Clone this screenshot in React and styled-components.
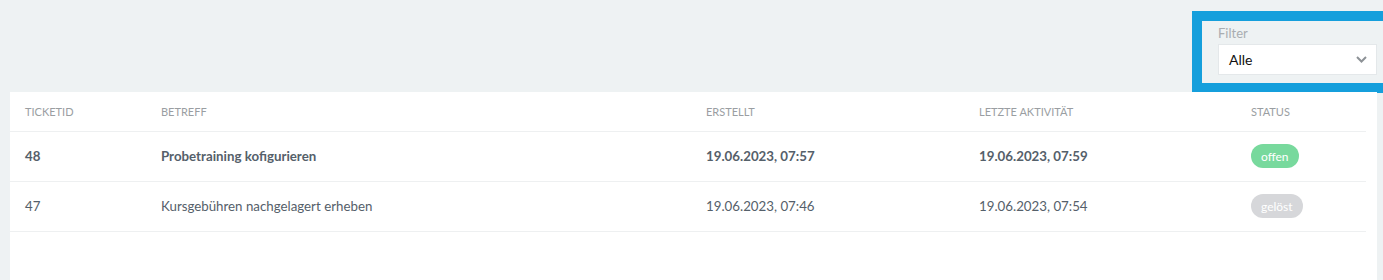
import React from "react";
import styled, { createGlobalStyle } from "styled-components";

const Global = createGlobalStyle`
  html, body { margin: 0; padding: 0; background: #eef2f3; }
  body { font-family: Lato, "Noto Sans", sans-serif; overflow: hidden; }
  * { box-sizing: border-box; }
`;

const Page = styled.div`
  width: 1383px;
  height: 280px;
  background: #eef2f3;
  display: flex;
  flex-direction: column;
  overflow: hidden;
`;

const TopBar = styled.div`
  display: flex;
  justify-content: flex-end;
  padding-top: 11px;
  height: 92px;
`;

const FilterFrame = styled.div`
  width: 201px;
  margin-right: -10px;
  flex-shrink: 0;
  border: 10px solid #159fdc;
  background: #eef2f3;
  padding: 4px 0 7px 16px;
  height: 82px;
  display: flex;
  flex-direction: column;
`;

const FilterInner = styled.div`
  display: flex;
  flex-direction: column;
  width: 159px;
`;

const FilterLabel = styled.label`
  font-size: 13px;
  color: #a9adb1;
  line-height: 16px;
  height: 19px;
`;

const Select = styled.div`
  height: 31px;
  background: #fff;
  border: 1px solid #e4e8ea;
  display: flex;
  align-items: center;
  justify-content: space-between;
  padding: 0 9px 0 10px;
  font-size: 14px;
  color: #111;
`;

const Chevron = () => (
  <svg width="11" height="7" viewBox="0 0 11 7">
    <path d="M1 1l4.5 4.5L10 1" fill="none" stroke="#8d9296" strokeWidth="2" />
  </svg>
);

const Card = styled.div`
  margin-left: 10px;
  width: 1367px;
  background: #fff;
  padding-right: 11px;
  flex: 1;
`;

const Table = styled.table`
  width: 100%;
  border-collapse: collapse;
  table-layout: fixed;
`;

const Th = styled.th`
  text-align: left;
  font-weight: 400;
  font-size: 11px;
  color: #9a9ea2;
  text-transform: uppercase;
  padding: 0 0 0 15px;
  height: 39px;
  border-bottom: 1px solid #eef0f1;
  width: ${(p) => p.$w || "auto"};
`;

const Td = styled.td`
  font-size: 13.3px;
  color: #55606a;
  font-weight: ${(p) => (p.$bold ? 700 : 400)};
  padding: 0 0 0 15px;
  height: 50px;
  border-bottom: 1px solid #eef0f1;
  white-space: nowrap;
`;

const Badge = styled.span`
  display: inline-flex;
  align-items: center;
  justify-content: center;
  height: 24px;
  padding: 0 10px;
  border-radius: 12px;
  font-size: 12px;
  color: #fff;
  background: ${(p) => (p.$status === "offen" ? "#78d99d" : "#d6d7da")};
`;

const tickets = [
  { id: 48, subject: "Probetraining kofigurieren", created: "19.06.2023, 07:57", last: "19.06.2023, 07:59", status: "offen", bold: true },
  { id: 47, subject: "Kursgebühren nachgelagert erheben", created: "19.06.2023, 07:46", last: "19.06.2023, 07:54", status: "gelöst", bold: false },
];

export default function App() {
  return (
    <Page>
      <Global />
      <TopBar>
        <FilterFrame>
          <FilterInner>
            <FilterLabel>Filter</FilterLabel>
            <Select>
              <span>Alle</span>
              <Chevron />
            </Select>
          </FilterInner>
        </FilterFrame>
      </TopBar>
      <Card>
        <Table>
          <thead>
            <tr>
              <Th $w="136px">TicketID</Th>
              <Th $w="545px">Betreff</Th>
              <Th $w="273px">Erstellt</Th>
              <Th $w="272px">Letzte Aktivität</Th>
              <Th>Status</Th>
            </tr>
          </thead>
          <tbody>
            {tickets.map((t) => (
              <tr key={t.id}>
                <Td $bold={t.bold}>{t.id}</Td>
                <Td $bold={t.bold}>{t.subject}</Td>
                <Td $bold={t.bold}>{t.created}</Td>
                <Td $bold={t.bold}>{t.last}</Td>
                <Td>
                  <Badge $status={t.status}>{t.status}</Badge>
                </Td>
              </tr>
            ))}
          </tbody>
        </Table>
      </Card>
    </Page>
  );
}
